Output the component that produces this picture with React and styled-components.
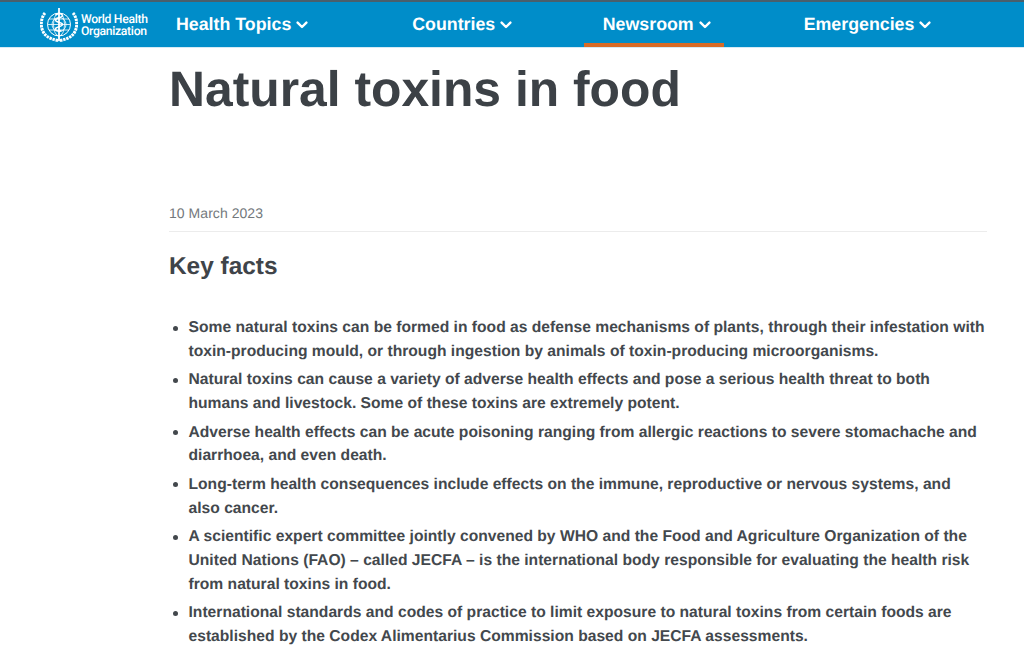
import React from "react";
import styled, { createGlobalStyle } from "styled-components";

const Global = createGlobalStyle`
  html, body { margin: 0; padding: 0; background: #fff; overflow: hidden; }
  body {
    font-family: "Liberation Sans", Arial, sans-serif;
    color: #3c4146;
    text-rendering: geometricPrecision;
  }
`;

const Page = styled.div`
  width: 1024px;
  height: 662px;
  overflow: hidden;
`;

const Header = styled.header`
  height: 45px;
  display: flex;
  align-items: stretch;
  background: #008dc9;
  border-top: 2px solid #4a5f6c;
  border-bottom: 1px solid #d5eaf5;
  box-sizing: content-box;
  padding-left: 40px;
`;

const Logo = styled.div`
  width: 117px;
  display: flex;
  align-items: center;
  gap: 3px;
  color: #fff;
`;

const LogoText = styled.div`
  font-family: "Roboto", sans-serif;
  font-size: 12.2px;
  line-height: 12px;
  font-weight: 500;
  letter-spacing: -0.32px;
  white-space: nowrap;
`;

const Nav = styled.nav`
  display: flex;
  align-items: stretch;
`;

const NavItem = styled.a`
  margin-left: ${(p) => p.$offset}px;
  padding: 4px 13px 0 19px;
  display: flex;
  align-items: center;
  gap: 5px;
  box-sizing: border-box;
  color: #fff;
  font-size: 17.8px;
  font-weight: 700;
  border-bottom: 4px solid ${(p) => (p.$active ? "#d86b26" : "transparent")};
  white-space: nowrap;
`;

const Main = styled.main`
  width: 818px;
  margin-left: 169px;
`;

const Title = styled.h1`
  margin: 0;
  padding-top: 11px;
  font-size: 49.8px;
  line-height: 60px;
  font-weight: 700;
  color: #3c4146;
`;

const DateLine = styled.div`
  margin-top: 85px;
  padding-bottom: 9px;
  font-size: 14px;
  letter-spacing: 0.05px;
  line-height: 18px;
  color: #73787c;
  border-bottom: 1px solid #ececec;
`;

const Heading = styled.h2`
  margin: 19.5px 0 0;
  font-size: 24.4px;
  line-height: 30px;
  font-weight: 700;
  color: #3f4449;
`;

const Facts = styled.ul`
  margin: 34.6px 0 0;
  padding: 0 2px 0 19.5px;
  list-style: none;
`;

const Fact = styled.li`
  position: relative;
  font-size: 15.65px;
  line-height: 23.7px;
  font-weight: 700;
  color: #43484d;
  margin-bottom: 4.9px;
  &::before {
    content: "";
    position: absolute;
    left: -15.5px;
    top: 9.5px;
    width: 5px;
    height: 5px;
    border-radius: 50%;
    background: #43484d;
  }
`;

const Chevron = () => (
  <svg width="12" height="8" viewBox="0 0 12 8" fill="none" stroke="#fff" strokeWidth="2.4" strokeLinecap="round" strokeLinejoin="round">
    <path d="M1.6 1.6 6 6 10.4 1.6" />
  </svg>
);

const Emblem = () => (
  <svg width="38" height="36" viewBox="0 0 38 36" fill="none" stroke="#fff">
    <circle cx="19" cy="17.5" r="11.5" strokeWidth="1" />
    <ellipse cx="19" cy="17.5" rx="5.5" ry="11.5" strokeWidth=".8" />
    <circle cx="19" cy="17.5" r="7" strokeWidth=".8" />
    <path d="M7.5 17.5h23M9 12h20M9 23h20" strokeWidth=".8" />
    <path d="M19 1v33" strokeWidth="1.8" />
    <path d="M15.5 8c4-2.5 7-1 7 .8s-7 2.2-7 4.4 7 2 7 4.3-7 2.2-7 4.4 4 2.5 6 1.6" strokeWidth="1.5" />
    <path d="M5 6C.5 11-.5 22 5.5 28c3.2 3.2 8 5 13.5 5.5M33 6c4.5 5 5.5 16-.5 22-3.2 3.2-8 5-13.5 5.5" strokeWidth="3" strokeDasharray="2.4 .8" />
  </svg>
);

const navItems = [
  { label: "Health Topics", offset: 0 },
  { label: "Countries", offset: 72 },
  { label: "Newsroom", offset: 58.5, active: true },
  { label: "Emergencies", offset: 61 },
];

const facts = [
  "Some natural toxins can be formed in food as defense mechanisms of plants, through their infestation with toxin-producing mould, or through ingestion by animals of toxin-producing microorganisms.",
  "Natural toxins can cause a variety of adverse health effects and pose a serious health threat to both humans and livestock. Some of these toxins are extremely potent.",
  "Adverse health effects can be acute poisoning ranging from allergic reactions to severe stomachache and diarrhoea, and even death.",
  "Long-term health consequences include effects on the immune, reproductive or nervous systems, and also cancer.",
  "A scientific expert committee jointly convened by WHO and the Food and Agriculture Organization of the United Nations (FAO) – called JECFA – is the international body responsible for evaluating the health risk from natural toxins in food.",
  "International standards and codes of practice to limit exposure to natural toxins from certain foods are established by the Codex Alimentarius Commission based on JECFA assessments.",
];

export default function App() {
  return (
    <Page>
      <Global />
      <Header>
        <Logo>
          <Emblem />
          <LogoText>
            World Health
            <br />
            Organization
          </LogoText>
        </Logo>
        <Nav>
          {navItems.map((n) => (
            <NavItem key={n.label} $offset={n.offset} $active={n.active}>
              {n.label}
              <Chevron />
            </NavItem>
          ))}
        </Nav>
      </Header>
      <Main>
        <Title>Natural toxins in food</Title>
        <DateLine>10 March 2023</DateLine>
        <Heading>Key facts</Heading>
        <Facts>
          {facts.map((f) => (
            <Fact key={f}>{f}</Fact>
          ))}
        </Facts>
      </Main>
    </Page>
  );
}
